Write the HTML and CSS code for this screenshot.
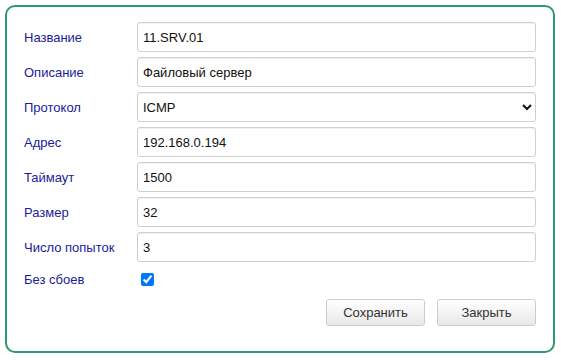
FILE: index.html
```html
<!DOCTYPE html>
<html lang="ru">
<head>
    <meta charset="UTF-8">
    <meta name="viewport" content="width=device-width, initial-scale=1.0">
    <title>Параметры узла</title>
    <link rel="stylesheet" href="styles.css">
</head>
<body>
    <form id="formulario" class="painel">
        <div class="grade">
            <label for="nome">Название</label>
            <input type="text" id="nome" value="11.SRV.01">

            <label for="descricao">Описание</label>
            <input type="text" id="descricao" value="Файловый сервер">

            <label for="protocolo">Протокол</label>
            <select id="protocolo">
                <option>ICMP</option>
                <option>TCP</option>
                <option>HTTP</option>
            </select>

            <label for="endereco">Адрес</label>
            <input type="text" id="endereco" value="192.168.0.194">

            <label for="timeout">Таймаут</label>
            <input type="text" id="timeout" value="1500">

            <label for="tamanho">Размер</label>
            <input type="text" id="tamanho" value="32">

            <label for="tentativas">Число попыток</label>
            <input type="text" id="tentativas" value="3">

            <label for="semfalhas" class="linha-check">Без сбоев</label>
            <div class="linha-check">
                <input type="checkbox" id="semfalhas" checked>
            </div>
        </div>

        <div class="botoes">
            <button type="submit">Сохранить</button>
            <button type="button">Закрыть</button>
        </div>
    </form>
</body>
</html>
```

FILE: styles.css
```css
* {
  box-sizing: border-box;
}

body {
  margin: 0;
  background: #ffffff;
  font-family: "Liberation Sans", Arial, Helvetica, sans-serif;
  font-size: 13px;
}

.painel {
  margin: 5px;
  width: 550px;
  height: 348px;
  border: 2px solid #2b9a6b;
  border-radius: 10px;
  padding: 15px 17px 0 17px;
}

.grade {
  display: grid;
  grid-template-columns: 113px 1fr;
  row-gap: 5px;
  align-items: center;
}

.grade label {
  color: #1b1b9a;
}

.grade input[type="text"],
.grade select {
  height: 30px;
  width: 100%;
  border: 1px solid #cfcfcf;
  border-radius: 3px;
  padding: 0 5px;
  font-family: inherit;
  font-size: 13px;
  color: #111;
  background: #fff;
  box-shadow: inset 0 1px 1px rgba(0, 0, 0, 0.06);
}

.grade select {
  padding-left: 1px;
}

.linha-check {
  height: 24px;
  display: flex;
  align-items: center;
}

.linha-check input {
  margin: 0 0 0 4px;
  width: 13px;
  height: 13px;
}

.botoes {
  display: flex;
  justify-content: flex-end;
  gap: 12px;
  margin-top: 8px;
}

.botoes button {
  width: 99px;
  height: 27px;
  border: 1px solid #cccccc;
  border-radius: 3px;
  background: linear-gradient(#ffffff, #e8e8e8);
  font-family: inherit;
  font-size: 13px;
  color: #333;
  cursor: pointer;
}
```
